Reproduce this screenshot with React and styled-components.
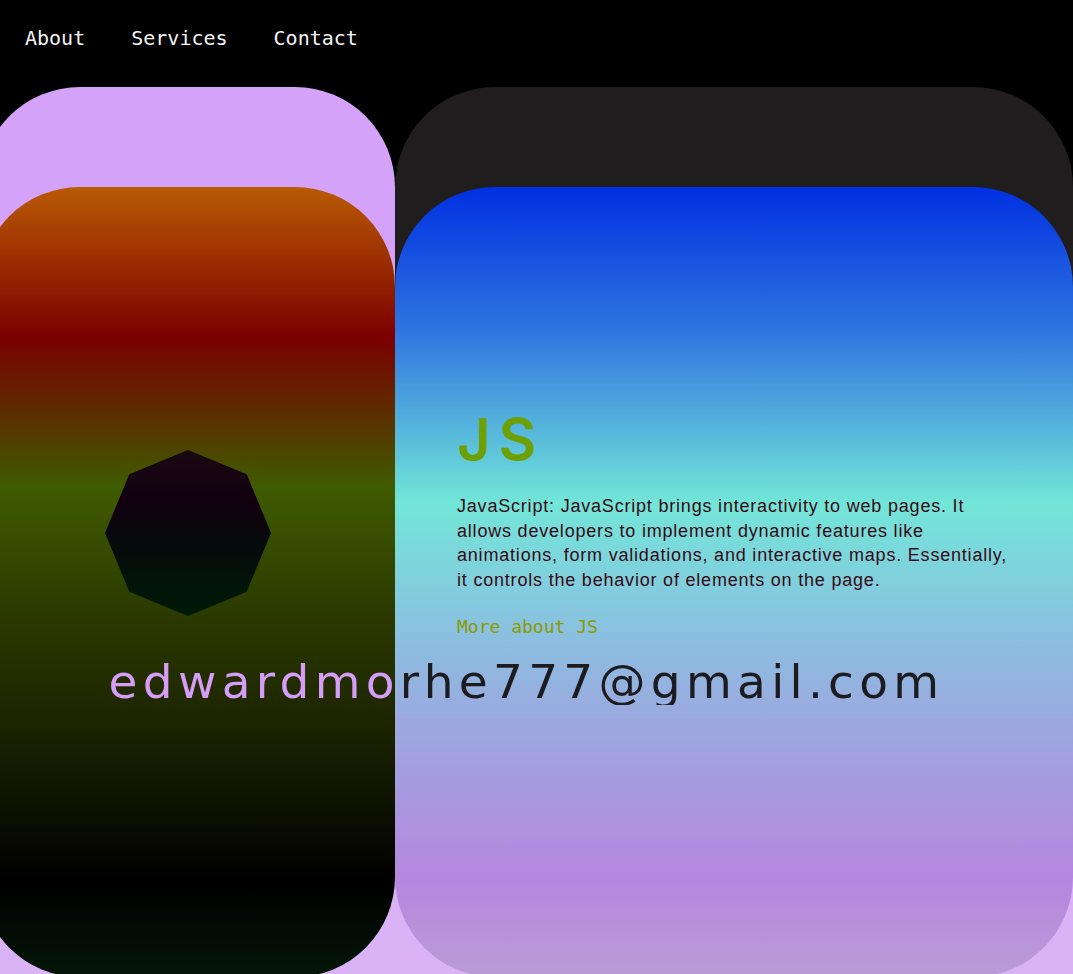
import React from "react";
import styled, { createGlobalStyle } from "styled-components";

const GlobalStyle = createGlobalStyle`
  html, body {
    margin: 0;
    padding: 0;
    background: #000;
    overflow: hidden;
  }
  * {
    box-sizing: border-box;
  }
`;

const Page = styled.div`
  min-height: 974px;
  background: #000;
`;

const Header = styled.header`
  height: 87px;
  display: flex;
  align-items: flex-start;
  gap: 46px;
  padding: 26px 0 0 25px;
`;

const NavLink = styled.a`
  font-family: "DejaVu Sans Mono", "Liberation Mono", monospace;
  font-size: 20px;
  line-height: 24px;
  color: #f4f4f4;
  text-decoration: none;
  cursor: pointer;
`;

// all layers share one grid cell, pushed down by margin
const Stack = styled.section`
  display: grid;
  margin-left: -20px;
  & > * {
    grid-area: 1 / 1;
  }
`;

const Panel = styled.div`
  display: grid;
  grid-template-columns: 415px 1fr;
  height: ${(p) => p.height}px;
  margin-top: ${(p) => p.offset || 0}px;
`;

const Backdrop = styled.div`
  margin-top: 200px;
  background: #dab3f6;
`;

const Card = styled.div`
  grid-row: 1;
  grid-column: ${(p) => p.col};
  background: ${(p) => p.bg};
  border-radius: ${(p) => (p.topOnly ? "100px 100px 0 0" : "100px")};
`;

const warm = `linear-gradient(180deg,
  #b95a04 0%,
  #7b0000 19%,
  #3f5b00 38%,
  #2a3800 55%,
  #1c2400 68%,
  #000000 88%,
  #041608 100%)`;

const cool = `linear-gradient(180deg,
  #0030e2 0%,
  #2f74e0 18%,
  #72e6d8 40%,
  #8bbfe0 57%,
  #9ca8df 68%,
  #b686df 88%,
  #ba9cd6 100%)`;

const ShapeCard = styled(Card)`
  display: flex;
  justify-content: center;
  align-items: flex-start;
  padding-top: 263px;
`;

const InfoCard = styled(Card)`
  padding: 223px 54px 0 62px;
`;

const Heading = styled.h2`
  margin: 0;
  font-family: Inter, "Liberation Sans", sans-serif;
  font-weight: 600;
  font-size: 58px;
  line-height: 1;
  letter-spacing: 8px;
  color: #6e9f05;
`;

const Body = styled.p`
  margin: 26px 0 0 0;
  font-family: "Liberation Sans", Arial, sans-serif;
  font-size: 18px;
  line-height: 24.7px;
  letter-spacing: 0.8px;
  color: #360a16;
`;

const MoreLink = styled.a`
  display: block;
  margin-top: 22px;
  font-family: "DejaVu Sans Mono", "Liberation Mono", monospace;
  font-size: 18px;
  line-height: 24px;
  color: #8d9a00;
  text-decoration: none;
  cursor: pointer;
`;

const Email = styled.div`
  grid-row: 1;
  grid-column: 1 / -1;
  align-self: start;
  margin-top: 471px;
  text-align: center;
  font-family: "DejaVu Sans", Verdana, sans-serif;
  font-size: 47px;
  line-height: 1;
  letter-spacing: 5.3px;
  background: linear-gradient(90deg, #d59cf8 415px, #1c1b1f 415px);
  -webkit-background-clip: text;
  background-clip: text;
  color: transparent;
  pointer-events: none;
`;

const Octagon = () => (
  <svg width="166" height="166" viewBox="0 0 166 166">
    <defs>
      <linearGradient id="oct" x1="0" y1="0" x2="0" y2="1">
        <stop offset="0" stopColor="#1a0811" />
        <stop offset="0.3" stopColor="#110010" />
        <stop offset="0.6" stopColor="#050c0b" />
        <stop offset="1" stopColor="#001a08" />
      </linearGradient>
    </defs>
    <polygon
      points="83,0 141.7,24.3 166,83 141.7,141.7 83,166 24.3,141.7 0,83 24.3,24.3"
      fill="url(#oct)"
    />
  </svg>
);

export default function App() {
  return (
    <Page>
      <GlobalStyle />
      <Header>
        <NavLink>About</NavLink>
        <NavLink>Services</NavLink>
        <NavLink>Contact</NavLink>
      </Header>
      <Stack>
        <Panel height={200}>
          <Card col={1} bg="#d5a2f9" topOnly />
          <Card col={2} bg="#201d1e" topOnly />
        </Panel>
        <Backdrop />
        <Panel height={790} offset={100}>
          <ShapeCard col={1} bg={warm}>
            <Octagon />
          </ShapeCard>
          <InfoCard col={2} bg={cool}>
            <Heading>JS</Heading>
            <Body>
              JavaScript: JavaScript brings interactivity to web pages. It
              allows developers to implement dynamic features like animations,
              form validations, and interactive maps. Essentially, it controls
              the behavior of elements on the page.
            </Body>
            <MoreLink>More about JS</MoreLink>
          </InfoCard>
          <Email>edwardmorhe777@gmail.com</Email>
        </Panel>
      </Stack>
    </Page>
  );
}
